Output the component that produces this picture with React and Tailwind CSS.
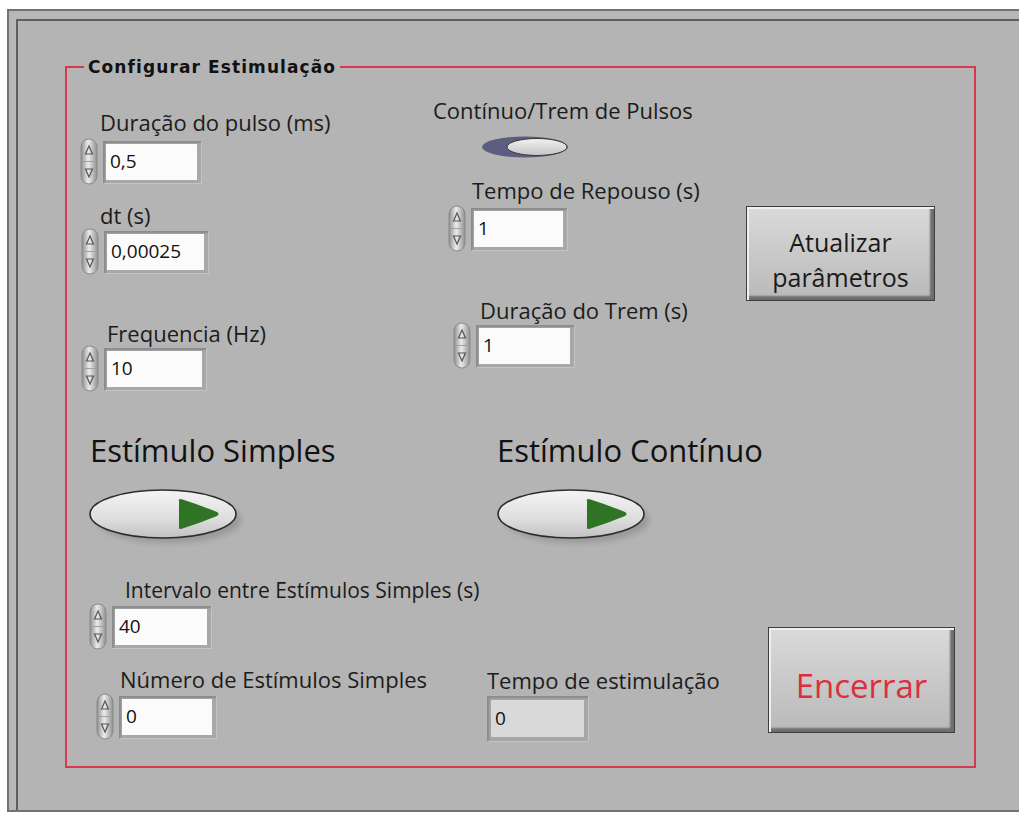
import React from 'react';

const sans = { fontFamily: '"Open Sans", "Noto Sans", sans-serif' };

function Spinner() {
  return (
    <svg width="20" height="47" viewBox="0 0 20 47" className="shrink-0">
      <defs>
        <linearGradient id="spinG" x1="0" y1="0" x2="1" y2="0">
          <stop offset="0" stopColor="#8e8e8e" />
          <stop offset="0.45" stopColor="#ececec" />
          <stop offset="1" stopColor="#909090" />
        </linearGradient>
      </defs>
      <rect x="2" y="1" width="16" height="45" rx="8" fill="url(#spinG)" stroke="#8a8a8a" />
      <line x1="3" y1="23.5" x2="17" y2="23.5" stroke="#a0a0a0" />
      <path d="M10 8 L6.5 16 H13.5 Z" fill="none" stroke="#555" strokeWidth="1.2" />
      <path d="M6.5 31 H13.5 L10 39 Z" fill="none" stroke="#555" strokeWidth="1.2" />
    </svg>
  );
}

function NumBox({ value, w = 'w-[98px]' }) {
  return (
    <div className={`${w} ml-[4px] h-[42px] bg-[#a8a8a8] pt-[3px] pl-[3px] pr-[4px] pb-[3px] shadow-[inset_2px_2px_2px_#8a8a8a,1px_1px_0_#c4c4c4]`}>
      <div className="w-full h-full bg-[#fbfbfb] pl-[4px] flex items-center text-[19px] text-[#111]">
        {value}
      </div>
    </div>
  );
}

function Control({ label, value, className = '', labelCls = '', rowCls = '', boxW, size = 'text-[22px]' }) {
  return (
    <div className={className}>
      <div className={`h-[24px] leading-[24px] ${size} text-[#1c1c1c] whitespace-nowrap ${labelCls}`}>
        {label}
      </div>
      <div className={`flex items-center ${rowCls}`}>
        <Spinner />
        <NumBox value={value} w={boxW} />
      </div>
    </div>
  );
}

function BigToggle() {
  return (
    <svg width="160" height="62" viewBox="0 0 160 62">
      <defs>
        <linearGradient id="ovalG" x1="0" y1="0" x2="0" y2="1">
          <stop offset="0" stopColor="#f4f4f4" />
          <stop offset="0.6" stopColor="#dedede" />
          <stop offset="1" stopColor="#c2c2c2" />
        </linearGradient>
        <filter id="blurF" x="-20%" y="-40%" width="140%" height="180%">
          <feGaussianBlur stdDeviation="3" />
        </filter>
      </defs>
      <ellipse cx="80" cy="32" rx="72" ry="23" fill="#8c8c8c" opacity="0.7" filter="url(#blurF)" />
      <ellipse cx="74" cy="26" rx="73" ry="24" fill="url(#ovalG)" stroke="#2c2c2c" strokeWidth="1.6" />
      <path d="M90 13 Q89 11 92 11 Q111 17 128 24 Q131 26 128 28 Q111 35 92 41 Q89 41 90 39 Z" fill="#2f7424" />
    </svg>
  );
}

function SmallToggle() {
  return (
    <svg width="90" height="24" viewBox="0 0 90 24">
      <defs>
        <linearGradient id="smallG" x1="0" y1="0" x2="0" y2="1">
          <stop offset="0" stopColor="#f2f2f2" />
          <stop offset="1" stopColor="#c4c4c4" />
        </linearGradient>
      </defs>
      <ellipse cx="44" cy="11" rx="43" ry="10.5" fill="#5d5d80" />
      <ellipse cx="56" cy="11" rx="30" ry="8.5" fill="url(#smallG)" stroke="#3a3a3a" strokeWidth="1" />
    </svg>
  );
}

function Bevel({ children, className = '' }) {
  return (
    <div
      className={`border border-[#3e3e3e] bg-gradient-to-b from-[#dadada] via-[#c9c9c9] to-[#b9b9b9] shadow-[inset_2px_2px_0_#f0f0f0,inset_-4px_-4px_2px_#6e6e6e] flex items-center justify-center text-center ${className}`}
    >
      {children}
    </div>
  );
}

export default function App() {
  return (
    <div className="w-[1019px] h-[816px] bg-white pt-[9px] overflow-hidden" style={sans}>
      <div className="ml-[7px] h-[803px] border-l-2 border-t-2 border-b-2 border-[#727272] bg-[#b7b7b7] pl-[7px] pt-[8px]">
        <div className="h-full border-l-2 border-t-2 border-[#5e5e5e] bg-[#b4b4b4] pl-[47px] pt-[37px]">
          <fieldset className="w-[911px] h-[710px] border-2 border-[#d7384a]">
            <legend
              className="ml-[17px] px-[4px] text-[17px] leading-[18px] font-bold tracking-[1.1px] text-[#111]"
              style={{ fontFamily: '"DejaVu Sans", Verdana, sans-serif' }}
            >
              Configurar Estimulação
            </legend>
            <div className="flex pl-[12px]">
              {/* coluna esquerda */}
              <div className="w-[354px] shrink-0 flex flex-col">
                <Control
                  className="mt-[34px]"
                  label="Duração do pulso (ms)"
                  value="0,5"
                  labelCls="ml-[21px]"
                  rowCls="mt-[4px]"
                />
                <Control
                  className="mt-[18px]"
                  label="dt (s)"
                  value="0,00025"
                  labelCls="ml-[21px]"
                  rowCls="mt-[1px] ml-[1px]"
                  boxW="w-[104px]"
                />
                <Control
                  className="mt-[46px]"
                  label="Frequencia (Hz)"
                  value="10"
                  labelCls="ml-[28px]"
                  rowCls="ml-[1px]"
                  boxW="w-[102px]"
                />
                <div className="mt-[40px] ml-[11px] h-[36px] leading-[36px] text-[31px] text-[#111] whitespace-nowrap">
                  Estímulo Simples
                </div>
                <div className="mt-[20px] ml-[10px]">
                  <BigToggle />
                </div>
                <Control
                  className="mt-[28px]"
                  label="Intervalo entre Estímulos Simples (s)"
                  value="40"
                  size="text-[21px]"
                  labelCls="ml-[46px]"
                  rowCls="mt-[1px] ml-[9px]"
                  boxW="w-[99px]"
                />
                <Control
                  className="mt-[17px]"
                  label="Número de Estímulos Simples"
                  value="0"
                  labelCls="ml-[41px]"
                  rowCls="mt-[2px] ml-[16px]"
                  boxW="w-[97px]"
                />
              </div>

              {/* coluna central */}
              <div className="w-[313px] shrink-0 flex flex-col">
                <div className="mt-[22px] h-[24px] leading-[24px] text-[22px] text-[#1c1c1c] whitespace-nowrap">
                  Contínuo/Trem de Pulsos
                </div>
                <div className="mt-[14px] ml-[48px] h-[24px]">
                  <SmallToggle />
                </div>
                <Control
                  className="mt-[18px]"
                  label="Tempo de Repouso (s)"
                  value="1"
                  labelCls="ml-[39px]"
                  rowCls="mt-[3px] ml-[14px]"
                  boxW="w-[96px]"
                />
                <Control
                  className="mt-[46px]"
                  label="Duração do Trem (s)"
                  value="1"
                  labelCls="ml-[47px]"
                  rowCls="ml-[19px]"
                  boxW="w-[98px]"
                />
                <div className="mt-[63px] ml-[64px] h-[36px] leading-[36px] text-[31px] text-[#111] whitespace-nowrap">
                  Estímulo Contínuo
                </div>
                <div className="mt-[20px] ml-[64px]">
                  <BigToggle />
                </div>
                <div className="mt-[118px] ml-[54px] h-[24px] leading-[24px] text-[22px] text-[#1c1c1c] whitespace-nowrap">
                  Tempo de estimulação
                </div>
                <div className="mt-[4px] ml-[54px] w-[101px] h-[45px] bg-[#a6a6a6] p-[4px] shadow-[inset_2px_2px_2px_#8a8a8a,1px_1px_0_#c4c4c4]">
                  <div className="w-full h-full bg-[#d9d9d9] pl-[4px] flex items-center text-[19px] text-[#111]">0</div>
                </div>
              </div>

              {/* coluna direita */}
              <div className="flex flex-col">
                <Bevel className="mt-[130px] w-[189px] h-[95px] pt-[12px] text-[25px] leading-[35px] text-[#1a1a1a]">
                  Atualizar
                  <br />
                  parâmetros
                </Bevel>
                <Bevel className="mt-[326px] ml-[22px] w-[187px] h-[106px] pt-[12px] text-[33px] text-[#dc2f3e]">
                  Encerrar
                </Bevel>
              </div>
            </div>
          </fieldset>
        </div>
      </div>
    </div>
  );
}
